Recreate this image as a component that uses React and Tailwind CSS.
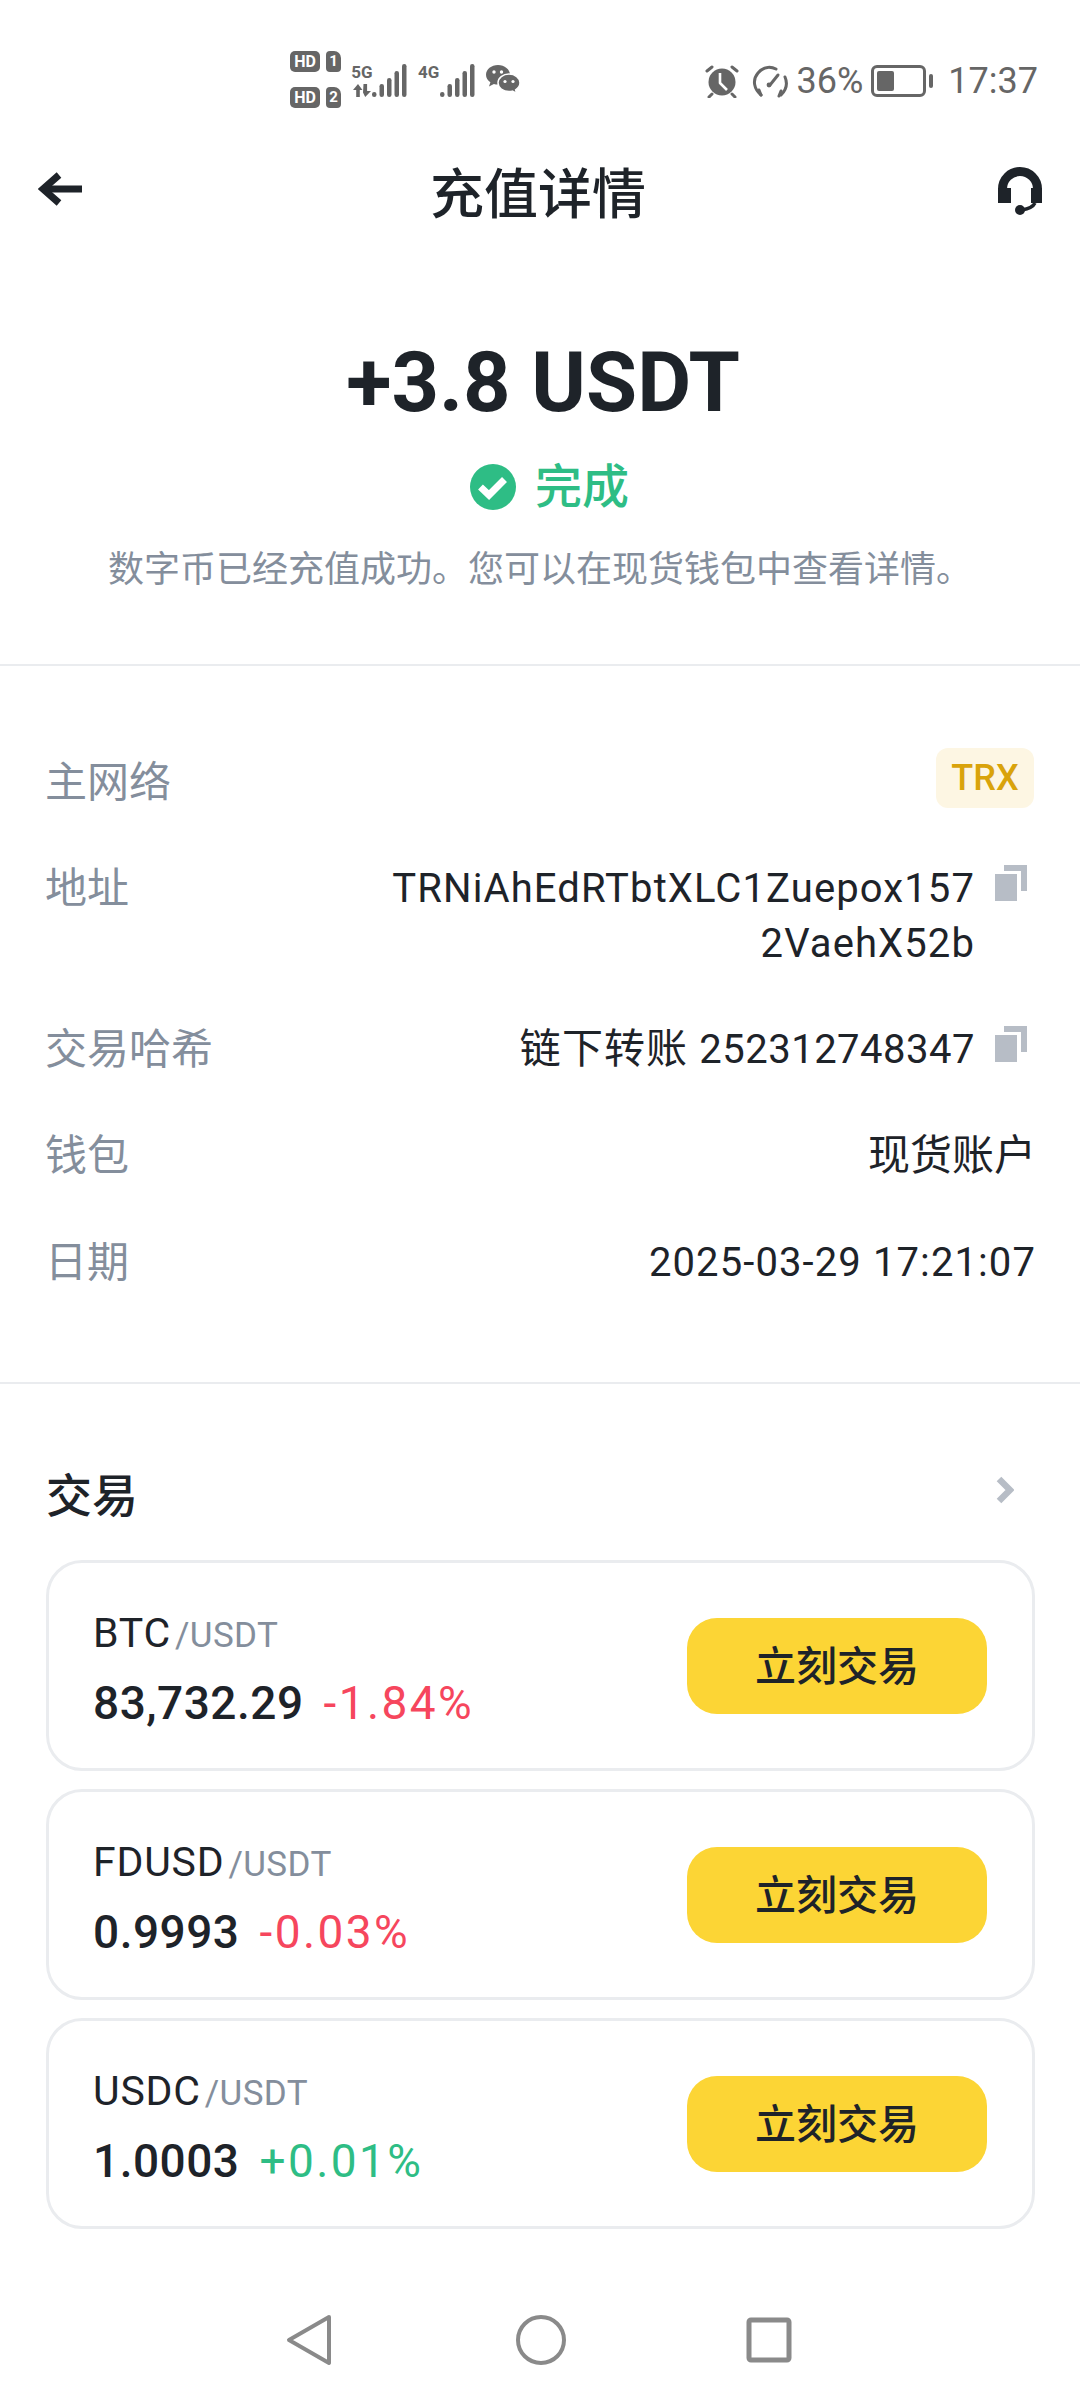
const cjk = "font-['Roboto','Noto_Sans_CJK_SC',sans-serif]";

function HdBadge({ slot }) {
  return (
    <div className="flex items-center gap-[6px]">
      <span className="flex h-[21px] w-[30px] items-center justify-center rounded-[5px] bg-[#666] text-[16px] leading-none font-bold text-white">HD</span>
      <span className="flex h-[21px] w-[15px] items-center justify-center rounded-[4px] rounded-tr-[7px] bg-[#666] text-[15px] leading-none font-bold text-white">{slot}</span>
    </div>
  );
}

const barSpots = [[1, 5], [8.5, 13], [16, 19], [23.5, 26], [31, 33]];

function SignalBars() {
  return (
    <svg width="36" height="34" viewBox="0 0 36 34" fill="#666">
      {barSpots.map(([x, h]) => (
        <rect key={x} x={x} y={34 - h} width="4.5" height={h} rx="2.2" />
      ))}
    </svg>
  );
}

function AlarmIcon() {
  return (
    <svg width="34" height="34" viewBox="0 0 34 34" fill="none">
      <circle cx="17" cy="18" r="13.5" fill="#666" />
      <path d="M15 9v10l7 7" stroke="#fff" strokeWidth="2.6" strokeLinejoin="round" />
      <path d="M2 7l5-4M32 7l-5-4M7 30l-3 3M27 30l3 3" stroke="#666" strokeWidth="3" strokeLinecap="round" />
    </svg>
  );
}

function GaugeIcon() {
  return (
    <svg width="36" height="34" viewBox="0 0 36 34" fill="none" stroke="#666" strokeWidth="3" strokeLinecap="round">
      <path d="M9 31C2 25 0 16 6 9c5-6 12-7 18-4" />
      <path d="M33 13c3 7 1 13-4 18" />
      <path d="M18 21l8-10" />
      <circle cx="17" cy="21" r="2.4" fill="#666" stroke="none" />
      <path d="M9 31l-2-5M27 32l2-5" />
    </svg>
  );
}

function WeChatIcon() {
  return (
    <svg width="34" height="30" viewBox="0 0 34 30">
      <path d="M12 0C5.4 0 0 4.3 0 9.8c0 3.1 1.7 5.7 4.4 7.5L3 21.500l4.900-2.600c1.300.4 2.700.6 4.100.6 6.600 0 12-4.400 12-9.700S18.600 0 12 0z" fill="#666" />
      <path d="M23 9c-6 0-11 3.900-11 8.800s5 8.800 11 8.800c1.200 0 2.300-.2 3.400-.5l4.300 2.400-1.100-3.700c2.700-1.600 4.400-4.100 4.400-7C34 12.900 29 9 23 9z" fill="#666" stroke="#fff" strokeWidth="1.500" />
      <circle cx="8" cy="7" r="1.700" fill="#fff" />
      <circle cx="15.500" cy="7" r="1.700" fill="#fff" />
      <circle cx="19" cy="16.500" r="1.600" fill="#fff" />
      <circle cx="27" cy="16.500" r="1.600" fill="#fff" />
    </svg>
  );
}

function DataArrows() {
  return (
    <svg width="18" height="13" viewBox="0 0 18 13" fill="#666">
      <path d="M5 0L0 6h3.200v7h3.600V6H9.500z" />
      <path d="M10.500 0h3.600v7H18l-5.800 6L10 8.500z" />
    </svg>
  );
}

function StatusBar() {
  return (
    <div className="flex h-[130px] items-start justify-between pt-[51px] pr-[42px] pl-[290px] font-['Roboto',sans-serif] text-[#666]">
      <div className="flex items-start">
        <div className="flex flex-col gap-[15px]">
          <HdBadge slot="1" />
          <HdBadge slot="2" />
        </div>
        <div className="mt-[12px] ml-[12px] flex items-start">
          <div className="flex w-[18px] flex-col items-center">
            <span className="text-[17px] leading-[18px] font-bold">5G</span>
            <div className="mt-[3px]">
              <DataArrows />
            </div>
          </div>
          <SignalBars />
          <span className="ml-[11px] text-[17px] leading-[18px] font-bold">4G</span>
          <SignalBars />
          <div className="mt-[2px] ml-[11px]">
            <WeChatIcon />
          </div>
        </div>
      </div>
      <div className="mt-[13px] flex items-center">
        <AlarmIcon />
        <div className="ml-[13px]">
          <GaugeIcon />
        </div>
        <span className="ml-[9px] text-[36px] leading-[34px]">36%</span>
        <div className="ml-[8px] flex items-center">
          <div className="flex h-[32px] w-[55px] items-center rounded-[6px] border-[3px] border-[#666] p-[3px]">
            <div className="h-full w-[17px] rounded-[2px] bg-[#666]" />
          </div>
          <div className="ml-[3px] h-[14px] w-[4px] rounded-full bg-[#666]" />
        </div>
        <span className="ml-[15px] text-[36px] leading-[34px]">17:37</span>
      </div>
    </div>
  );
}

function Header() {
  return (
    <div className="flex h-[118px] items-center justify-between pr-[37px] pl-[38px]">
      <svg width="44" height="34" viewBox="0 0 44 34" fill="none" stroke="#1e2329" strokeWidth="7">
        <path d="M44 17H6" />
        <path d="M21 3L5 17l16 14" />
      </svg>
      <h1 className="mt-[14px] mr-[4px] text-[54px] leading-none font-medium text-[#1e2329]">充值详情</h1>
      <svg width="45" height="48" viewBox="0 0 45 48" fill="none" className="mt-[4px]">
        <path d="M4.500 22a17.500 17.500 0 0 1 35 0" stroke="#1e2329" strokeWidth="9" />
        <rect x="0" y="21" width="13" height="15" fill="#1e2329" />
        <rect x="33" y="21" width="11" height="15" fill="#1e2329" />
        <path d="M37 36c-2 4-7 6-13 7" stroke="#1e2329" strokeWidth="3.500" />
        <circle cx="22" cy="43" r="5" fill="#1e2329" />
      </svg>
    </div>
  );
}

function Summary() {
  return (
    <div className="flex h-[418px] flex-col items-center border-b-2 border-[#eaecef] pt-[86px]">
      <div className="ml-[6px] text-[83px] leading-[98px] font-bold text-[#1e2329]">+3.8 USDT</div>
      <div className="mt-[26px] ml-[19px] flex items-center gap-[19px]">
        <svg width="46" height="46" viewBox="0 0 46 46">
          <circle cx="23" cy="23" r="23" fill="#2ebd85" />
          <path d="M10.500 23L19 31l15.500-15.500" fill="none" stroke="#fff" strokeWidth="7" />
        </svg>
        <span className="text-[47px] leading-[58px] font-medium text-[#2ebd85]">完成</span>
      </div>
      <p className="mt-[29px] text-[36px] leading-[50px] text-[#848e9c]">数字币已经充值成功。您可以在现货钱包中查看详情。</p>
    </div>
  );
}

function CopyIcon() {
  return (
    <svg width="32" height="36" viewBox="0 0 32 36" fill="#b7bdc6" className="shrink-0">
      <path d="M0 9h22v27H0z" />
      <path d="M9 0h23v26h-6V6H9z" />
    </svg>
  );
}

function DetailRow({ label, children, copy, className }) {
  return (
    <div className={`flex items-start justify-between ${className}`}>
      <span className="text-[42px] leading-[55px] text-[#848e9c]">{label}</span>
      <div className={`flex items-start ${copy ? "" : "-mr-[2px]"}`}>
        <div className="text-right text-[40px] leading-[55px] tracking-[1.1px] text-[#1e2329]">{children}</div>
        {copy && (
          <div className="mt-[4px] mr-[7px] ml-[20px]">
            <CopyIcon />
          </div>
        )}
      </div>
    </div>
  );
}

function Details() {
  return (
    <div className="h-[718px] border-b-2 border-[#eaecef] pt-[82px] pr-[46px] pl-[45px]">
      <div className="flex h-[60px] items-center justify-between">
        <span className="mt-[9px] text-[42px] leading-[55px] text-[#848e9c]">主网络</span>
        <span className="flex h-[60px] w-[98px] items-center justify-center rounded-[12px] bg-[#fdf6e3] text-[36px] font-medium text-[#d9a30b]">TRX</span>
      </div>
      <DetailRow label="地址" copy className="mt-[53px]">
        TRNiAhEdRTbtXLC1Zuepox157
        <br />
        2VaehX52b
      </DetailRow>
      <DetailRow label="交易哈希" copy className="mt-[51px]">
        <span className="text-[41px]">链下转账</span> <span className="tracking-[0.5px]">252312748347</span>
      </DetailRow>
      <DetailRow label="钱包" className="mt-[51px]">
        <span className="text-[42px] tracking-normal">现货账户</span>
      </DetailRow>
      <DetailRow label="日期" className="mt-[51px]">2025-03-29 17:21:07</DetailRow>
    </div>
  );
}

function PairCard({ base, price, change, up }) {
  return (
    <div className="flex h-[211px] items-center justify-between rounded-[36px] border-[3px] border-[#eaecef] pr-[45px] pl-[44px]">
      <div className="pt-[5px]">
        <div className="flex items-baseline">
          <span className="text-[41px] leading-[52px] tracking-[0.8px] text-[#1e2329]">{base}</span>
          <span className="ml-[4px] text-[35px] leading-[52px] tracking-[0.4px] text-[#848e9c]">/USDT</span>
        </div>
        <div className="mt-[15px] flex items-baseline gap-[20px] text-[46px] leading-[52px]">
          <span className="font-medium tracking-[0.5px] text-[#1e2329]">{price}</span>
          <span className={`tracking-[2.4px] ${up ? "text-[#2ebd85]" : "text-[#f6465d]"}`}>{change}</span>
        </div>
      </div>
      <button className="h-[96px] w-[300px] rounded-[30px] bg-[#fcd535] pt-[4px] text-[41px] font-medium text-[#1e2329]">立刻交易</button>
    </div>
  );
}

function Trade() {
  return (
    <div className="pt-[78px] pr-[45px] pl-[46px]">
      <div className="flex h-[52px] items-center justify-between">
        <span className="mt-[16px] text-[46px] leading-[52px] font-medium text-[#1e2329]">交易</span>
        <svg width="18" height="28" viewBox="0 0 18 28" fill="none" stroke="#b7bdc6" strokeWidth="6.500" className="mt-[4px] mr-[21px]">
          <path d="M3 3l11 11L3 25" />
        </svg>
      </div>
      <div className="mt-[46px] flex flex-col gap-[18px]">
        <PairCard base="BTC" price="83,732.29" change="-1.84%" />
        <PairCard base="FDUSD" price="0.9993" change="-0.03%" />
        <PairCard base="USDC" price="1.0003" change="+0.01%" up />
      </div>
    </div>
  );
}

function NavBar() {
  return (
    <div className="mt-[85px] flex items-center pl-[286px]">
      <svg width="46" height="52" viewBox="0 0 46 52" fill="none" stroke="#8a8a8a" strokeWidth="4" strokeLinejoin="round">
        <path d="M43 3L3 26l40 23z" />
      </svg>
      <svg width="50" height="50" viewBox="0 0 50 50" fill="none" stroke="#8a8a8a" strokeWidth="4" className="ml-[184px]">
        <circle cx="25" cy="25" r="23" />
      </svg>
      <svg width="46" height="46" viewBox="0 0 46 46" fill="none" stroke="#8a8a8a" strokeWidth="5" strokeLinejoin="round" className="ml-[180px]">
        <rect x="3" y="3" width="40" height="40" rx="2" />
      </svg>
    </div>
  );
}

export default function App() {
  return (
    <div className={`h-[2400px] w-[1080px] overflow-hidden bg-white ${cjk}`}>
      <StatusBar />
      <Header />
      <Summary />
      <Details />
      <Trade />
      <NavBar />
    </div>
  );
}
